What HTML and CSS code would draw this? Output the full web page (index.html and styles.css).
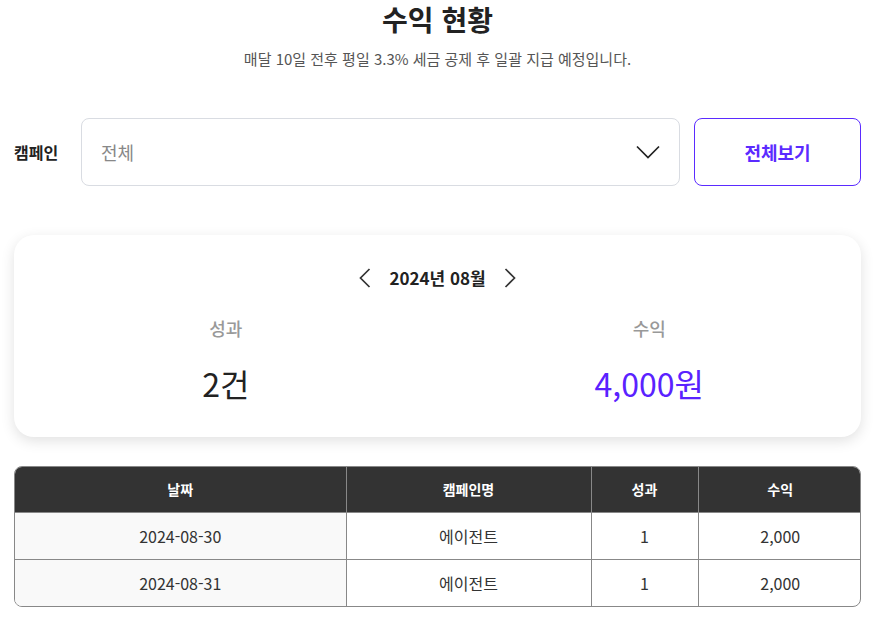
FILE: index.html
```html
<!DOCTYPE html>
<html lang="ko">
<head>
<meta charset="utf-8">
<link rel="stylesheet" href="styles.css">
</head>
<body>
<div class="page">
  <header class="head">
    <h1 class="title">수익 현황</h1>
    <p class="subtitle">매달 10일 전후 평일 3.3% 세금 공제 후 일괄 지급 예정입니다.</p>
  </header>

  <div class="filter">
    <span class="filter-label">캠페인</span>
    <div class="select">
      <span class="select-value">전체</span>
      <svg class="select-arrow" width="24" height="14" viewBox="0 0 24 14"><path d="M1 1.5 L12 12.5 L23 1.5" fill="none" stroke="#222" stroke-width="1.7"/></svg>
    </div>
    <button class="btn-all">전체보기</button>
  </div>

  <section class="card">
    <div class="month-nav">
      <svg width="12" height="20" viewBox="0 0 12 20"><path d="M10.5 1 L1.5 10 L10.5 19" fill="none" stroke="#333" stroke-width="1.7"/></svg>
      <span class="month">2024년 08월</span>
      <svg width="12" height="20" viewBox="0 0 12 20"><path d="M1.5 1 L10.5 10 L1.5 19" fill="none" stroke="#333" stroke-width="1.7"/></svg>
    </div>
    <div class="stats">
      <div class="stat">
        <div class="stat-label">성과</div>
        <div class="stat-value">2건</div>
      </div>
      <div class="stat">
        <div class="stat-label">수익</div>
        <div class="stat-value accent">4,000원</div>
      </div>
    </div>
  </section>

  <div class="table-wrap">
    <table class="table">
      <colgroup>
        <col class="c1"><col class="c2"><col class="c3"><col class="c4">
      </colgroup>
      <thead>
        <tr><th>날짜</th><th>캠페인명</th><th>성과</th><th>수익</th></tr>
      </thead>
      <tbody>
        <tr><td class="date">2024-08-30</td><td>에이전트</td><td>1</td><td>2,000</td></tr>
        <tr><td class="date">2024-08-31</td><td>에이전트</td><td>1</td><td>2,000</td></tr>
      </tbody>
    </table>
  </div>
</div>
</body>
</html>
```

FILE: styles.css
```css
* { box-sizing: border-box; }
html, body { margin: 0; padding: 0; background: #fff; }
body {
  font-family: "Noto Sans CJK KR", "Noto Sans", sans-serif;
  color: #333;
}
.page {
  width: 847px;
  margin-left: 14px;
  padding-top: 2px;
}
.head { text-align: center; }
.title {
  margin: 0;
  font-size: 28px;
  line-height: 34px;
  font-weight: 700;
  color: #222;
}
.subtitle {
  margin: 12px 0 0;
  font-size: 15px;
  line-height: 22px;
  color: #555;
}
.filter {
  display: flex;
  align-items: center;
  margin-top: 48px;
  height: 68px;
}
.filter-label {
  width: 67px;
  font-size: 16px;
  font-weight: 700;
  color: #222;
}
.select {
  flex: 0 0 599px;
  height: 68px;
  border: 1px solid #d9dce2;
  border-radius: 8px;
  display: flex;
  align-items: center;
  justify-content: space-between;
  padding: 0 19px 0 19px;
}
.select-value {
  font-size: 18px;
  color: #888;
}
.btn-all {
  margin-left: 14px;
  flex: 0 0 167px;
  height: 68px;
  border: 1px solid #5b2bff;
  border-radius: 8px;
  background: #fff;
  color: #5b2bff;
  font-family: inherit;
  font-size: 18px;
  font-weight: 700;
}
.card {
  margin-top: 49px;
  height: 202px;
  border-radius: 20px;
  background: #fff;
  box-shadow: 0 4px 14px rgba(0,0,0,0.12);
  padding-top: 30px;
}
.month-nav {
  display: flex;
  justify-content: center;
  align-items: center;
  gap: 18px;
  height: 26px;
}
.month {
  font-size: 17px;
  font-weight: 700;
  color: #222;
  line-height: 26px;
}
.stats {
  display: grid;
  grid-template-columns: 1fr 1fr;
  margin-top: 24px;
  text-align: center;
}
.stat-label {
  font-size: 18px;
  line-height: 26px;
  font-weight: 500;
  color: #999;
}
.stat-value {
  margin-top: 18px;
  font-size: 32px;
  line-height: 48px;
  color: #222;
}
.stat-value.accent { color: #5a22ff; }
.table-wrap {
  margin-top: 29px;
  border: 1px solid #888;
  border-radius: 8px;
  overflow: hidden;
}
.table {
  width: 100%;
  border-collapse: collapse;
  table-layout: fixed;
}
.c1 { width: 331px; }
.c2 { width: 245px; }
.c3 { width: 107px; }
.c4 { width: 164px; }
.table th {
  background: #333;
  color: #fff;
  font-size: 14px;
  font-weight: 700;
  height: 45px;
  border-left: 1px solid #888;
  padding: 0;
}
.table td {
  height: 47px;
  font-size: 16px;
  color: #333;
  text-align: center;
  border-left: 1px solid #888;
  border-top: 1px solid #888;
  padding: 0;
}
.table th:first-child, .table td:first-child { border-left: none; }
.table td.date { background: #f9f9f9; }
```
